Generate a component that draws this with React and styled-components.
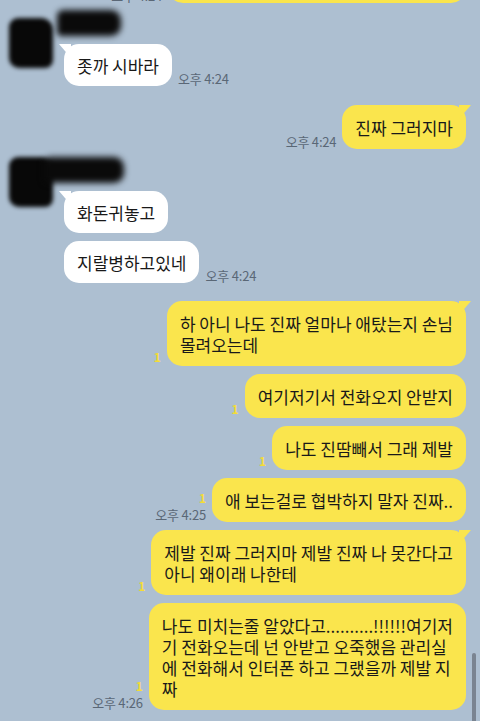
import React from "react";
import styled, { createGlobalStyle, css } from "styled-components";

const GlobalStyle = createGlobalStyle`
  html, body {
    margin: 0;
    padding: 0;
    background: #adbfd1;
  }
  body {
    font-family: "Noto Sans CJK KR", "Noto Sans", sans-serif;
    overflow: hidden;
  }
`;

const Screen = styled.div`
  position: relative;
  width: 480px;
  height: 721px;
  overflow: hidden;
  background: #adbfd1;
`;

const Chat = styled.div`
  display: flex;
  flex-direction: column;
  margin-top: -41px;
`;

const SentGroup = styled.div`
  display: flex;
  flex-direction: column;
  align-items: flex-end;
  gap: 8px;
  padding-right: 14px;
  margin-top: ${(p) => p.$gap || 0}px;
`;

const ReceivedGroup = styled.div`
  display: flex;
  align-items: flex-start;
  gap: 11px;
  padding-left: 9px;
  margin-top: ${(p) => p.$gap || 0}px;
`;

const Avatar = styled.div`
  width: 44px;
  height: 50px;
  margin-top: ${(p) => p.$shift || 0}px;
  border-radius: 9px 12px 8px 10px;
  background: #080808;
  filter: blur(2px);
  flex-shrink: 0;
`;

const Stack = styled.div`
  display: flex;
  flex-direction: column;
  align-items: flex-start;
  gap: 8px;
`;

const Name = styled.div`
  width: ${(p) => p.$w}px;
  height: 26px;
  margin-top: -10px;
  margin-left: ${(p) => p.$left}px;
  border-radius: 6px 10px 10px 4px;
  background: #0a0a0a;
  filter: blur(3px);
`;

const Row = styled.div`
  display: flex;
  align-items: flex-end;
  gap: 6px;
`;

const Bubble = styled.div`
  position: relative;
  background: ${(p) => (p.$mine ? "#fae54d" : "#ffffff")};
  color: #191919;
  border-radius: 15px;
  padding: ${(p) => (p.$mine ? "11.5px 13px" : "10.5px 13px")};
  font-size: 17px;
  line-height: 21px;
  white-space: pre;
  ${(p) =>
    p.$tail &&
    css`
      &::before {
        content: "";
        position: absolute;
        top: 0;
        ${p.$mine ? "right: -5px;" : "left: -5px;"}
        width: 12px;
        height: 14px;
        background: inherit;
        clip-path: ${p.$mine
          ? "polygon(0 0, 100% 0, 0 100%)"
          : "polygon(0 0, 100% 0, 100% 100%)"};
      }
    `}
`;

const CutBubble = styled(Bubble)`
  width: 272px;
`;

const Meta = styled.div`
  display: flex;
  flex-direction: column;
  align-items: ${(p) => (p.$mine ? "flex-end" : "flex-start")};
  flex-shrink: 0;
`;

const Unread = styled.span`
  font-size: 12px;
  line-height: 14px;
  font-weight: 600;
  color: #f4dc36;
  margin-bottom: 2px;
`;

const Time = styled.span`
  font-size: 13px;
  line-height: 15px;
  letter-spacing: -0.2px;
  color: #5a6776;
  white-space: nowrap;
`;

const ScrollThumb = styled.div`
  position: absolute;
  right: 4px;
  top: 653px;
  width: 4px;
  height: 90px;
  border-radius: 2px;
  background: #7a8491;
`;

const MetaInfo = ({ mine, unread, time }) =>
  unread || time ? (
    <Meta $mine={mine}>
      {unread && <Unread>{unread}</Unread>}
      {time && <Time>{time}</Time>}
    </Meta>
  ) : null;

const SentMessage = ({ text, tail, unread, time }) => (
  <Row>
    <MetaInfo mine unread={unread} time={time} />
    <Bubble $mine $tail={tail}>
      {text}
    </Bubble>
  </Row>
);

const ReceivedMessage = ({ text, tail, time }) => (
  <Row>
    <Bubble $tail={tail}>{text}</Bubble>
    <MetaInfo time={time} />
  </Row>
);

const sentLater = [
  { text: "하 아니 나도 진짜 얼마나 애탔는지 손님\n몰려오는데", tail: true, unread: "1" },
  { text: "여기저기서 전화오지 안받지", unread: "1" },
  { text: "나도 진땀빼서 그래 제발", unread: "1" },
  { text: "애 보는걸로 협박하지 말자 진짜..", unread: "1", time: "오후 4:25" },
  { text: "제발 진짜 그러지마 제발 진짜 나 못간다고\n아니 왜이래 나한테", tail: true, unread: "1" },
  {
    text:
      "나도 미치는줄 알았다고..........!!!!!!여기저\n기 전화오는데 넌 안받고 오죽했음 관리실\n에 전화해서 인터폰 하고 그랬을까 제발 지\n짜",
    unread: "1",
    time: "오후 4:26",
  },
];

export default function App() {
  return (
    <>
      <GlobalStyle />
      <Screen>
        <Chat>
          <SentGroup>
            <Row>
              <MetaInfo mine time="오후 4:24" />
              <CutBubble $mine>{" "}</CutBubble>
            </Row>
          </SentGroup>

          <ReceivedGroup $gap={17}>
            <Avatar $shift={-2} />
            <Stack>
              <Name $w={64} $left={-7} />
              <ReceivedMessage text="좃까 시바라" tail time="오후 4:24" />
            </Stack>
          </ReceivedGroup>

          <SentGroup $gap={19}>
            <SentMessage text="진짜 그러지마" tail time="오후 4:24" />
          </SentGroup>

          <ReceivedGroup $gap={18}>
            <Avatar $shift={-10} />
            <Stack>
              <Name $w={80} $left={-20} />
              <ReceivedMessage text="화돈귀놓고" tail />
              <ReceivedMessage text="지랄병하고있네" time="오후 4:24" />
            </Stack>
          </ReceivedGroup>

          <SentGroup $gap={18}>
            {sentLater.map((m, i) => (
              <SentMessage key={i} {...m} />
            ))}
          </SentGroup>
        </Chat>
        <ScrollThumb />
      </Screen>
    </>
  );
}
